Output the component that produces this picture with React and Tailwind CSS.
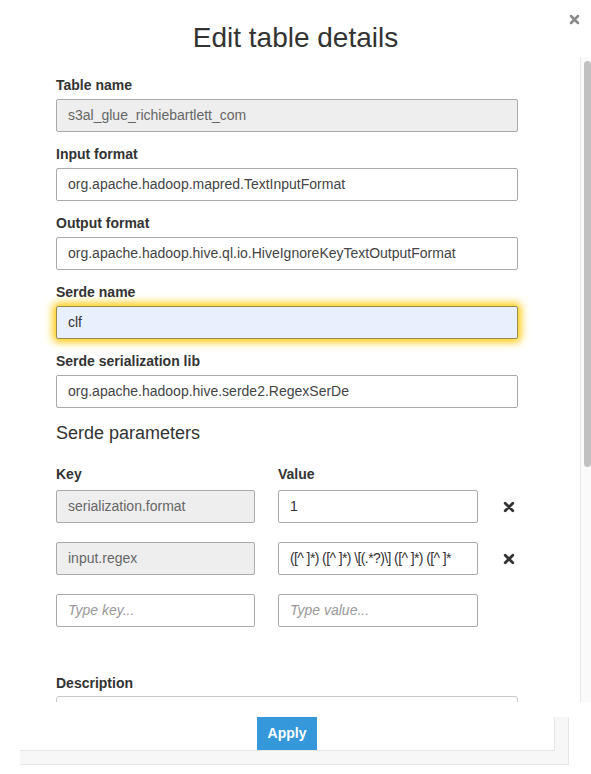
import React from "react";

const font = { fontFamily: '"Liberation Sans", Arial, sans-serif' };

const XIcon = ({ className }) => (
  <svg viewBox="0 0 12 12" className={className} fill="none">
    <path d="M2.2 2.2 L9.8 9.8 M9.8 2.2 L2.2 9.8" stroke="currentColor" strokeWidth="2.8" strokeLinecap="round" />
  </svg>
);

/* ================= FIELD ================= */
const Field = ({ label, value, disabled, focused }) => {
  let box = "border-[#aaaaaa] bg-white text-[#444]";
  if (disabled) box = "border-[#aaaaaa] bg-[#eeeeee] text-[#666]";
  if (focused)
    box = "border-[#9a8a50] bg-[#e8f0fe] text-[#333] shadow-[0_0_8px_3px_#ffc800]";

  return (
    <div className="mb-[12px]">
      <div className="h-[20px] leading-[20px] mb-[4px] text-[14px] font-bold text-[#333]">
        {label}
      </div>
      <div className={`h-[33px] w-[462px] border rounded-[2px] px-[11px] flex items-center text-[14px] ${box}`}>
        {value}
      </div>
    </div>
  );
};

const ParamInput = ({ value, disabled, placeholder, dark, width, tight }) => (
  <div
    className={`h-[33px] border border-[#aaaaaa] rounded-[2px] px-[11px] flex items-center text-[14px] whitespace-nowrap overflow-hidden ${
      disabled ? "bg-[#eeeeee] text-[#666]" : "bg-white"
    } ${placeholder ? "italic text-[#999]" : dark ? "text-[#333]" : ""} ${
      tight ? "tracking-[-0.6px]" : ""
    } ${width}`}
  >
    {value || placeholder}
  </div>
);

const ParamRow = ({ k, v, kPlaceholder, vPlaceholder, removable, tight }) => (
  <div className="flex items-center mb-[19px]">
    <ParamInput value={k} disabled={!!k} placeholder={kPlaceholder} width="w-[199px]" />
    <div className="w-[23px]" />
    <ParamInput value={v} placeholder={vPlaceholder} dark tight={tight} width="w-[200px]" />
    {removable && <XIcon className="w-[12px] h-[12px] ml-[25px] text-[#333]" />}
  </div>
);

export default function App() {
  return (
    <div className="relative w-[591px] h-[774px] bg-white overflow-hidden" style={font}>
      {/* HEADER */}
      <div className="h-[57px] flex justify-center pt-[22px]">
        <h2 className="text-[28px] leading-[32px] text-[#333] font-normal">Edit table details</h2>
      </div>
      <button className="absolute right-[11px] top-[14px] text-[#888]">
        <XIcon className="w-[11px] h-[11px]" />
      </button>

      {/* BODY */}
      <div className="flex h-[645px]">
        <div className="flex-1 overflow-hidden pl-[56px] pt-[18px]">
          <Field label="Table name" value="s3al_glue_richiebartlett_com" disabled />
          <Field label="Input format" value="org.apache.hadoop.mapred.TextInputFormat" />
          <Field label="Output format" value="org.apache.hadoop.hive.ql.io.HiveIgnoreKeyTextOutputFormat" />
          <Field label="Serde name" value="clf" focused />
          <Field label="Serde serialization lib" value="org.apache.hadoop.hive.serde2.RegexSerDe" />

          <div className="h-[24px] leading-[24px] mt-[13px] text-[18px] text-[#333]">Serde parameters</div>

          <div className="flex mt-[19px] mb-[6px] h-[20px] leading-[20px] text-[14px] font-bold text-[#333]">
            <div className="w-[222px]">Key</div>
            <div>Value</div>
          </div>

          <ParamRow k="serialization.format" v="1" removable />
          <ParamRow k="input.regex" v="([^ ]*) ([^ ]*) \[(.*?)\] ([^ ]*) ([^ ]*" removable tight />
          <ParamRow kPlaceholder="Type key..." vPlaceholder="Type value..." />

          <div className="mt-[46px] h-[20px] leading-[20px] mb-[3px] text-[14px] font-bold text-[#333]">
            Description
          </div>
          <div className="h-[60px] w-[462px] border border-[#c8c8c8] rounded-[3px]" />
        </div>

        {/* SCROLLBAR */}
        <div className="w-[11px] bg-[#fafafa] border-l border-[#e6e6e6] pt-[4px] pl-[3px]">
          <div className="w-[7px] h-[406px] rounded-full bg-[#c1c1c1]" />
        </div>
      </div>

      {/* FOOTER */}
      <div className="pt-[15px] pl-[20px]">
        <div className="w-[549px] bg-[#f7f7f7] border-r border-b border-[#e6e6e6] pb-[13px]">
          <div className="w-[535px] h-[34px] bg-white border-r border-b border-[#e6e6e6] flex justify-center">
            <button className="w-[60px] h-[33px] bg-[#3498db] text-white text-[14px] font-bold">Apply</button>
          </div>
        </div>
      </div>
    </div>
  );
}
